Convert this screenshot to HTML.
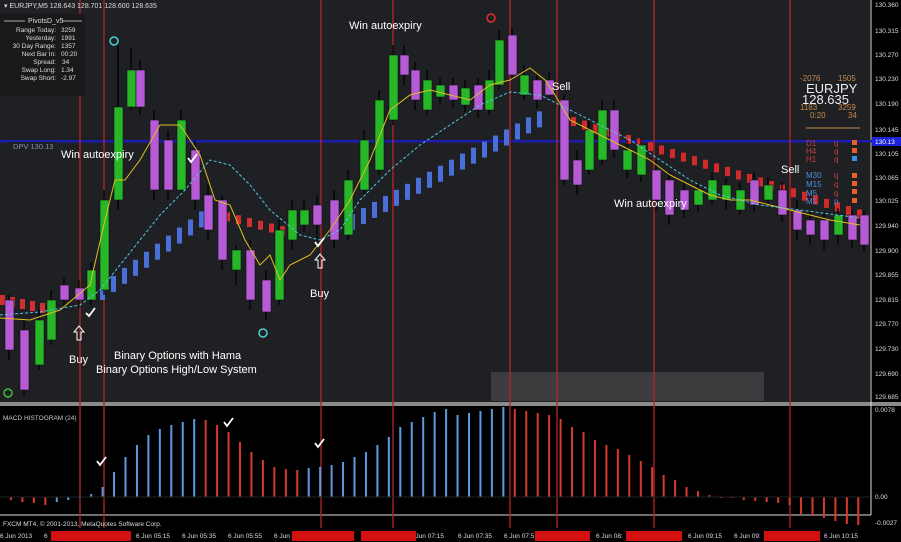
<!DOCTYPE html>
<html><head><meta charset="utf-8"><style>
html,body{margin:0;padding:0;background:#000;width:901px;height:542px;overflow:hidden}
svg{display:block;font-family:"Liberation Sans",sans-serif}
</style></head><body>
<svg id="s" width="901" height="542" xmlns="http://www.w3.org/2000/svg">
<rect width="901" height="542" fill="#000"/>
<rect x="0" y="0" width="870" height="402" fill="#1f2023"/>
<rect x="0" y="402" width="901" height="4" fill="#8a8a8a"/>
<line x1="871" y1="0" x2="871" y2="515" stroke="#ddd" stroke-width="1"/>
<line x1="0" y1="515" x2="871" y2="515" stroke="#ddd" stroke-width="1"/>
<rect x="0" y="140" width="901" height="2.5" fill="#1c1cb0"/>
<rect x="491" y="372" width="273" height="29" fill="#3c3c3e"/>
<g id="vl" stroke="#b3262a" stroke-width="1.3"></g>
<g id="lad"></g>
<g id="cd"></g>
<polyline fill="none" stroke="#e0c020" stroke-width="1" points="0,318 30,320 60,310 90,285 105,220 115,180 125,180 140,160 160,125 180,125 200,155 215,200 230,205 245,240 260,265 270,255 280,280 290,265 310,255 330,230 350,200 370,160 390,110 410,95 430,90 450,95 470,100 490,85 510,80 530,68 545,80 555,95 570,120 590,130 610,140 630,150 650,160 670,175 690,185 710,195 730,200 750,200 770,205 790,210 810,215 830,220 860,225"/>
<polyline fill="none" stroke="#4fc8e0" stroke-width="1" stroke-dasharray="3,2" points="0,315 40,312 80,305 100,290 120,265 140,240 160,215 185,190 210,160 230,165 250,185 270,210 300,235 320,240 340,230 360,200 390,170 420,145 450,125 480,105 510,92 540,95 570,110 600,125 630,140 660,160 690,180 720,195 760,205 800,210 860,218"/>
<g id="mh"></g>
<line x1="0" y1="497" x2="870" y2="497" stroke="#222" stroke-width="1"/>
<text x="4" y="8" fill="#ddd" font-size="7">▾ EURJPY,M5  128.643 128.701 128.600 128.635</text>
<rect x="0" y="14" width="85" height="82" fill="#19191b"/>
<text x="28" y="23" fill="#ddd" font-size="7">PivotsD_v5</text>
<line x1="4" y1="21" x2="25" y2="21" stroke="#aaa"/><line x1="62" y1="21" x2="82" y2="21" stroke="#aaa"/>
<g fill="#ddd" font-size="6.5" text-anchor="end">
<text x="56" y="32">Range Today:</text><text x="56" y="40">Yesterday:</text><text x="56" y="48">30 Day Range:</text><text x="56" y="56">Next Bar In:</text><text x="56" y="64">Spread:</text><text x="56" y="72">Swap Long:</text><text x="56" y="80">Swap Short:</text></g>
<g fill="#ddd" font-size="6.5"><text x="61" y="32">3259</text><text x="61" y="40">1991</text><text x="61" y="48">1357</text><text x="61" y="56">00:20</text><text x="62" y="64">34</text><text x="61" y="72">1.34</text><text x="61" y="80">-2.97</text></g>
<rect x="6" y="142" width="50" height="9" fill="#1f2023"/>
<text x="13" y="149" fill="#8a8fb0" font-size="7.5">DPV  130.13</text>
<g font-size="8" fill="#c78a50"><text x="800" y="81">-2076</text><text x="838" y="81">1505</text><text x="800" y="110">1183</text><text x="838" y="110">3259</text><text x="810" y="118">0:20</text><text x="848" y="118">34</text></g>
<text x="806" y="93" fill="#eee" font-size="13">EURJPY</text>
<text x="802" y="104" fill="#eee" font-size="13">128.635</text>
<line x1="806" y1="128" x2="860" y2="128" stroke="#c78a50"/>
<g font-size="8"><text x="806" y="146" fill="#c04040">D1</text><text x="806" y="154" fill="#c04040">H4</text><text x="806" y="162" fill="#c04040">H1</text>
<text x="806" y="178" fill="#4a8ee0">M30</text><text x="806" y="187" fill="#4a8ee0">M15</text><text x="806" y="196" fill="#4a8ee0">M5</text><text x="806" y="204" fill="#4a8ee0">M1</text>
<text x="834" y="146" fill="#c04040">q</text><text x="834" y="154" fill="#c04040">q</text><text x="834" y="162" fill="#c04040">q</text><text x="834" y="178" fill="#c04040">q</text><text x="834" y="187" fill="#c04040">q</text><text x="834" y="196" fill="#c04040">q</text><text x="834" y="204" fill="#4a8ee0">p</text></g>
<g fill="#e8602a"><rect x="852" y="140" width="5" height="5"/><rect x="852" y="148" width="5" height="5"/><rect x="852" y="156" width="5" height="5" fill="#3a8ee8"/><rect x="852" y="173" width="5" height="5"/><rect x="852" y="181" width="5" height="5"/><rect x="852" y="189" width="5" height="5"/><rect x="852" y="198" width="5" height="5"/></g>
<g fill="#ddd" font-size="6.5"><text x="875" y="7">130.360</text><text x="875" y="33">130.315</text><text x="875" y="57">130.270</text><text x="875" y="81">130.230</text><text x="875" y="106">130.190</text><text x="875" y="132">130.145</text><text x="875" y="156">130.105</text><text x="875" y="180">130.065</text><text x="875" y="203">130.025</text><text x="875" y="228">129.940</text><text x="875" y="253">129.900</text><text x="875" y="277">129.855</text><text x="875" y="302">129.815</text><text x="875" y="326">129.770</text><text x="875" y="351">129.730</text><text x="875" y="376">129.690</text><text x="875" y="399">129.685</text>
<text x="875" y="412">0.0078</text><text x="875" y="499">0.00</text><text x="875" y="525">-0.0027</text></g>
<rect x="872" y="137" width="29" height="9" fill="#1b23d8"/><text x="875" y="144" fill="#fff" font-size="6.5">130.13</text>
<g fill="#fff" font-size="11" font-family="Liberation Sans, sans-serif">
<text x="349" y="29">Win autoexpiry</text><text x="61" y="158">Win autoexpiry</text><text x="614" y="207">Win autoexpiry</text>
<text x="552" y="90">Sell</text><text x="781" y="173">Sell</text><text x="69" y="363">Buy</text><text x="310" y="297">Buy</text>
<text x="114" y="359">Binary Options with Hama</text><text x="96" y="373">Binary Options High/Low System</text></g>
<g fill="none" stroke="#fff" stroke-width="1.8"><path d="M188 158l3 4 6-8"/><path d="M86 313l3 3 6-8"/><path d="M315 242l3 4 6-8"/><path d="M97 461l3 4 6-8"/><path d="M224 422l3 4 6-8"/><path d="M315 443l3 4 6-8"/></g>
<g fill="none" stroke="#fff"><path d="M77 340v-8h-3l5-6 5 6h-3v8z"/><path d="M318 268v-8h-3l5-6 5 6h-3v8z"/></g>
<circle cx="114" cy="41" r="4" fill="none" stroke="#4ad0d0" stroke-width="1.5"/><circle cx="263" cy="333" r="4" fill="none" stroke="#4ad0d0" stroke-width="1.5"/><circle cx="8" cy="393" r="4" fill="none" stroke="#40c040" stroke-width="1.5"/><circle cx="491" cy="18" r="4" fill="none" stroke="#e03030" stroke-width="1.5"/>
<text x="3" y="420" fill="#ccc" font-size="6.5">MACD HISTOGRAM (24)</text>
<text x="3" y="526" fill="#ddd" font-size="6.5">FXCM MT4, © 2001-2013, MetaQuotes Software Corp.</text>
<g id="ta" font-size="6.5"></g>
</svg>
<script>
var N="http://www.w3.org/2000/svg";
function el(p,t,a){var e=document.createElementNS(N,t);for(var k in a)e.setAttribute(k,a[k]);document.getElementById(p).appendChild(e);return e;}
[80,104,321,393,510,557,654,790].forEach(function(x){el("vl","line",{x1:x,y1:0,x2:x,y2:528});});
function lad(x0,y0,x1,y1,col,step,w,h){for(var x=x0;x<=x1;x+=step){var y=y0+(y1-y0)*(x-x0)/(x1-x0);el("lad","rect",{x:x,y:y-h/2,width:w,height:h,fill:col});}}
lad(0,300,50,310,"#d03030",10,5,10);lad(100,292,205,215,"#4a6fd8",11,5,16);lad(225,217,285,232,"#d03030",11,5,9);lad(350,222,545,115,"#4a6fd8",11,5,16);lad(560,118,860,215,"#d02a2a",11,5,9);
var C=[[5,300,350,0,295,360],[20,330,390,0,320,395],[35,320,365,1,310,370],[47,300,340,1,290,345],[60,285,300,0,278,310],[75,288,300,0,280,308],[87,270,300,1,262,305],[100,200,290,1,190,295],[114,107,200,1,45,210],[127,70,107,1,48,110],[136,70,107,0,60,115],[150,120,190,0,110,200],[164,140,190,0,130,200],[177,120,190,1,110,195],[191,150,200,0,140,210],[204,195,230,0,185,240],[218,200,260,0,195,270],[232,250,270,1,245,285],[246,250,300,0,240,310],[262,280,312,0,270,320],[275,230,300,1,220,305],[288,210,240,1,200,250],[300,210,225,1,200,232],[313,205,225,0,195,240],[330,200,240,0,190,248],[344,180,235,1,170,240],[360,140,190,1,130,195],[375,100,170,1,90,175],[389,55,120,1,45,125],[400,55,75,0,45,85],[411,70,100,0,62,110],[423,80,110,1,70,115],[436,85,97,1,78,105],[449,85,100,0,78,108],[461,88,105,1,80,112],[474,85,110,0,78,118],[485,80,110,1,70,115],[495,40,85,1,30,90],[508,35,75,0,28,80],[520,75,95,1,65,100],[533,80,100,0,72,108],[545,80,95,0,72,100],[560,100,180,0,95,185],[573,160,185,0,150,195],[585,130,170,1,120,175],[598,110,160,1,100,165],[610,110,150,0,100,158],[623,150,170,1,140,178],[637,145,175,1,138,182],[652,170,200,0,160,210],[665,180,215,0,172,225],[680,190,210,0,182,218],[694,190,205,1,182,212],[708,180,200,1,172,205],[722,185,200,1,178,210],[736,190,210,1,182,215],[750,180,205,0,172,212],[764,185,200,1,178,208],[778,190,215,0,182,222],[793,210,230,0,200,240],[806,220,235,0,212,245],[820,220,240,0,212,250],[834,215,235,1,208,245],[848,215,240,0,210,248],[860,215,245,0,210,252]];
C.forEach(function(c){el("cd","line",{x1:c[0]+4,y1:c[4],x2:c[0]+4,y2:c[5],stroke:"#000","stroke-width":1.2});el("cd","rect",{x:c[0],y:c[1],width:9,height:c[2]-c[1],fill:c[3]?"#27b82a":"#b65ad6",stroke:"#111","stroke-width":0.6});});
var H=[-3,-5,-6,-8,-5,-3,0,3,10,25,40,52,62,68,72,75,78,77,72,65,55,45,37,30,28,27,29,30,32,35,40,45,52,60,70,75,80,85,88,82,84,86,88,90,88,86,84,82,78,70,65,57,52,48,42,36,30,22,17,10,6,2,0,-1,-3,-4,-5,-6,-8,-17,-19,-21,-24,-27,-28];
H.forEach(function(h,i){var x=10+i*11.45;var blue=(i<17)||(i>=26&&i<44);if(i<6)blue=(i==4||i==5);var c=blue?"#5a9be0":"#d8392e";el("mh","rect",{x:x,y:h>=0?497-h:497,width:2,height:Math.max(Math.abs(h),1),fill:c});});
var T=[[0,"6 Jun 2013"],[44,"6"],[136,"6 Jun 05:15"],[182,"6 Jun 05:35"],[228,"6 Jun 05:55"],[274,"6 Jun"],[410,"6 Jun 07:15"],[458,"6 Jun 07:35"],[504,"6 Jun 07:5"],[596,"6 Jun 08:"],[688,"6 Jun 09:15"],[734,"6 Jun 09:"],[824,"6 Jun 10:15"]];
T.forEach(function(t){var e=el("ta","text",{x:t[0],y:538,fill:"#ddd"});e.textContent=t[1];});
[[51,80],[292,62],[361,55],[535,55],[626,56],[764,56]].forEach(function(r){el("ta","rect",{x:r[0],y:531,width:r[1],height:10,fill:"#d21010"});});
</script>
</body></html>
